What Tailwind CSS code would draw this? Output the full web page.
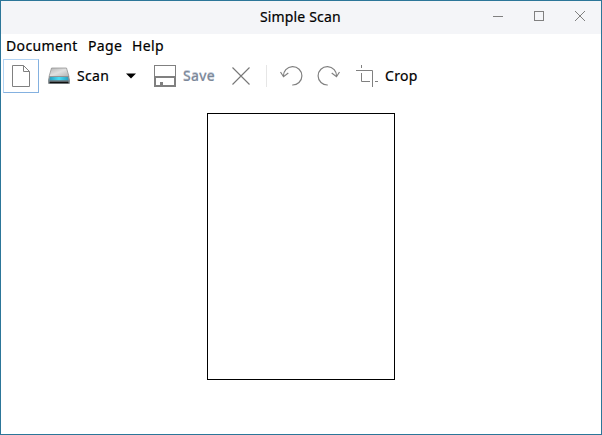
<!DOCTYPE html>
<html lang="en">
<head>
<meta charset="utf-8">
<title>Simple Scan</title>
<script src="https://cdn.jsdelivr.net/npm/@tailwindcss/browser@4"></script>
</head>
<body class="bg-white">
<div class="flex h-[435px] w-[602px] flex-col overflow-hidden border border-[#2c7699] bg-white font-['Noto_Sans',sans-serif] text-[14px] leading-[20px] tracking-[0.35px] text-black [-webkit-text-stroke:0.2px]">
  <header class="grid h-[33px] shrink-0 grid-cols-[1fr_auto_1fr] bg-[#f4f5f8]">
    <div></div>
    <h1 class="w-[82px] pt-[6px] whitespace-nowrap tracking-[0.15px]">Simple Scan</h1>
    <div class="flex justify-end gap-[31px] pt-[10px] pr-4">
      <svg class="size-[10px]" viewBox="0 0 10 10"><path d="M0 5.5h10" stroke="#808080"/></svg>
      <svg class="size-[10px]" viewBox="0 0 10 10"><rect x=".5" y=".5" width="9" height="9" fill="none" stroke="#808080"/></svg>
      <svg class="size-[10px]" viewBox="0 0 10 10"><path d="M0 0l10 10M10 0L0 10" stroke="#808080"/></svg>
    </div>
  </header>
  <nav class="flex h-[24px] shrink-0 pt-[2px] pl-[5px]">
    <span class="w-[82px]">Document</span>
    <span class="w-[44px]">Page</span>
    <span>Help</span>
  </nav>
  <div class="flex h-[36px] shrink-0 items-center pb-px pl-[2px]">
    <button class="flex h-[34px] w-[36px] shrink-0 justify-center border border-[#84b1e0] border-t-[#b3d4f4] border-l-[#b3d4f4] pt-[5px]">
      <svg class="h-[22px] w-[18px]" viewBox="0 0 18 22"><path d="M.5.5h11l6 6v15H.5zM11.5.5v6h6" fill="none" stroke="#808080"/></svg>
    </button>
    <svg class="ml-[9px] h-[18px] w-[22px] shrink-0" viewBox="0 0 22 18">
      <defs>
        <linearGradient id="lid" x2="1" y2="1"><stop stop-color="#b4b4b4"/><stop offset=".5" stop-color="#e0e0e0"/><stop offset="1" stop-color="#b4b4b4"/></linearGradient>
        <linearGradient id="glow"><stop stop-color="#2a9dbd"/><stop offset=".5" stop-color="#4cdcf5"/><stop offset="1" stop-color="#2a9dbd"/></linearGradient>
      </defs>
      <path d="M1 9h20l1 4v3q0 1-1 1H1q-1 0-1-1v-3z" fill="#8c9498"/>
      <path d="M3.5 1h15l2.500 8.500H1z" fill="url(#lid)" stroke="#8a8a8a" stroke-width=".7"/>
      <path d="M2 10h18l.5 3.500h-19z" fill="url(#glow)"/>
      <path d="M1.500 14h19" stroke="#5a686e"/>
      <path d="M1.500 15.500h19" stroke="#101010" stroke-width="1.500"/>
    </svg>
    <span class="ml-[7px] w-[49px]">Scan</span>
    <svg class="h-[6px] w-[10px] shrink-0" viewBox="0 0 10 6"><path d="M0 .5h10L5 5.500z"/></svg>
    <svg class="ml-[18px] size-[22px] shrink-0" viewBox="0 0 22 22"><path fill-rule="evenodd" fill="#808080" d="M0 0h22v22H0zM1 1v10h20V1zM2 13v7h4v-3h3v3h11v-7z"/></svg>
    <span class="ml-[7px] w-[49px] text-[#7b8798] [text-shadow:0_-1px_0_#c3ccd8]">Save</span>
    <svg class="size-[18px] shrink-0" viewBox="0 0 18 18"><path d="M.5.5l17 17M17.5.5l-17 17" stroke="#777" stroke-width="1.1"/></svg>
    <div class="ml-[16px] h-[22px] w-px bg-[#e6e6e6]"></div>
    <svg class="ml-[13px] h-[22px] w-[23px] shrink-0" viewBox="0 0 23 22"><path d="M3.500 11.500A9.200 9.200 0 1 1 12.200 20M.5 7l3 4.700L8.300 8" fill="none" stroke="#808080" stroke-width="1.2"/></svg>
    <svg class="ml-[14px] h-[22px] w-[23px] shrink-0" viewBox="0 0 23 22"><path d="M19.500 11.500A9.200 9.200 0 1 0 10.800 20M22.500 7l-3 4.700L14.700 8" fill="none" stroke="#808080" stroke-width="1.2"/></svg>
    <svg class="ml-[16px] size-[22px] shrink-0" viewBox="0 0 22 22"><path d="M5.500 0v3M0 5.500h16.500v16.500M5.500 8v8.500H14M19 16.500h3" fill="none" stroke="#808080"/></svg>
    <span class="ml-[7px]">Crop</span>
  </div>
  <main class="flex flex-1 justify-center pt-[19px]">
    <div class="h-[267px] w-[188px] border border-black bg-white"></div>
  </main>
</div>
</body>
</html>
